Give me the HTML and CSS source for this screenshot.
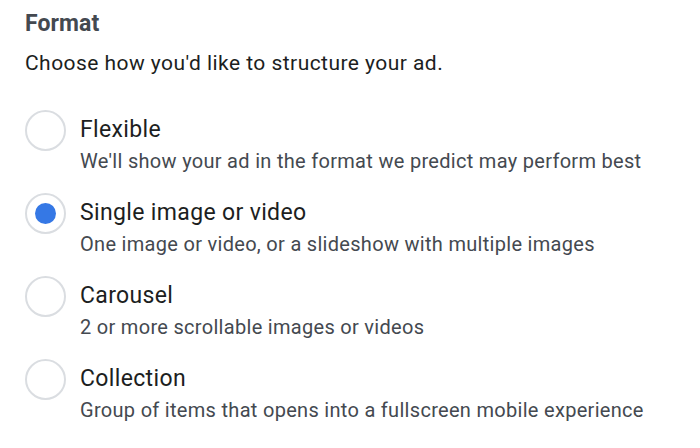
FILE: index.html
```html
<!DOCTYPE html>
<html>
<head>
<meta charset="utf-8">
<link rel="stylesheet" href="styles.css">
</head>
<body>
<div class="panel">
  <h2 class="title">Format</h2>
  <p class="intro">Choose how you'd like to structure your ad.</p>
  <div class="options">
    <div class="option">
      <span class="radio"></span>
      <div class="text">
        <div class="name">Flexible</div>
        <div class="desc">We'll show your ad in the format we predict may perform best</div>
      </div>
    </div>
    <div class="option">
      <span class="radio checked"></span>
      <div class="text">
        <div class="name">Single image or video</div>
        <div class="desc">One image or video, or a slideshow with multiple images</div>
      </div>
    </div>
    <div class="option">
      <span class="radio"></span>
      <div class="text">
        <div class="name">Carousel</div>
        <div class="desc">2 or more scrollable images or videos</div>
      </div>
    </div>
    <div class="option">
      <span class="radio"></span>
      <div class="text">
        <div class="name">Collection</div>
        <div class="desc">Group of items that opens into a fullscreen mobile experience</div>
      </div>
    </div>
  </div>
</div>
</body>
</html>
```
FILE: styles.css
```css
html, body {
  margin: 0;
  padding: 0;
  background: #ffffff;
}
body {
  font-family: Roboto, "Liberation Sans", Arial, sans-serif;
}
.panel {
  padding: 9px 0 0 25px;
}
.title {
  margin: 0;
  font-size: 23px;
  line-height: 30px;
  font-weight: 700;
  color: #444950;
  letter-spacing: 0.1px;
}
.intro {
  margin: 11px 0 0 0;
  font-size: 21px;
  line-height: 26px;
  color: #1c1e21;
  letter-spacing: 0.45px;
}
.options {
  display: flex;
  flex-direction: column;
  gap: 17px;
  margin-top: 34px;
}
.option {
  display: flex;
  align-items: flex-start;
  gap: 14px;
  height: 66px;
}
.radio {
  box-sizing: border-box;
  flex: none;
  width: 41px;
  height: 41px;
  border: 2px solid #dadde1;
  border-radius: 50%;
  display: flex;
  align-items: center;
  justify-content: center;
}
.radio.checked::after {
  content: "";
  width: 21px;
  height: 21px;
  border-radius: 50%;
  background: #3578e5;
}
.text {
  padding-top: 6px;
}
.name {
  font-size: 23px;
  line-height: 28px;
  color: #1c1e21;
  letter-spacing: 0.35px;
}
.desc {
  margin-top: 4px;
  font-size: 20px;
  line-height: 26px;
  color: #444950;
  letter-spacing: 0.3px;
}
```
